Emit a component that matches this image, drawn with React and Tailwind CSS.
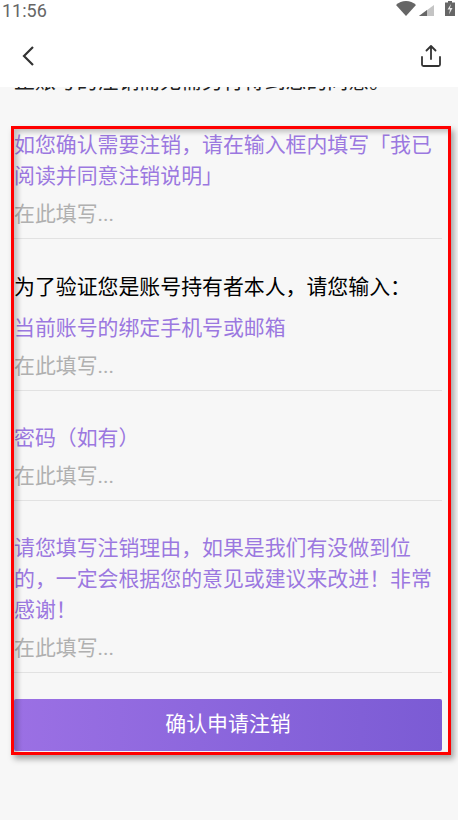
const FONT = "font-['Roboto','Noto_Sans_CJK_SC',sans-serif]";

function StatusIcons() {
  return (
    <div className="mt-[1px] flex items-end gap-[3px] self-start">
      <svg width="20" height="15" viewBox="0 0 20 15">
        <path d="M0 4C2.800 1.500 6.200 0 10 0s7.200 1.500 10 4L10 15z" fill="#666" />
      </svg>
      <svg width="15" height="11" viewBox="0 0 15 11">
        <path d="M15 0v11H0z" fill="#c4c4c4" />
        <path d="M8 5.100V11H0z" fill="#666" />
      </svg>
      <svg width="10" height="15" viewBox="0 0 10 15" className="ml-[8px]">
        <path d="M3 0h4v1.500h3V15H0V1.500h3z" fill="#666" />
        <path d="M6 3 2.500 8.500H5l-1 5 3.500-6.500H5z" fill="#e8e8e8" />
      </svg>
    </div>
  );
}

function Field({ label }) {
  return (
    <div className="border-b border-[#e2e2e2] pb-[8px]">
      <div className="text-[20.9px] leading-[31px] text-[#9b78e0]">{label}</div>
      <input
        placeholder="在此填写..."
        className="mt-[7px] block h-[31px] w-full bg-transparent text-[20.9px] leading-[31px] outline-none placeholder:text-[#b0b0b0]"
      />
    </div>
  );
}

export default function App() {
  return (
    <div className={`${FONT} flex h-[820px] w-[458px] flex-col overflow-hidden bg-[#f7f7f7]`}>
      <div className="bg-white">
        <div className="flex h-[20px] items-center justify-between pl-[2px] pr-[3px]">
          <span className="mt-[1px] text-[18px] leading-none text-[#666]">11:56</span>
          <StatusIcons />
        </div>
        <div className="flex h-[67px] items-center justify-between pl-[22px] pr-[17px] pt-[5px]">
          <svg width="12" height="20" viewBox="0 0 12 20" fill="none" stroke="#333" strokeWidth="2.200">
            <path d="M11 1 2 10l9 9" />
          </svg>
          <svg width="20" height="22" viewBox="0 0 20 22" fill="none" stroke="#333" strokeWidth="1.800" strokeLinecap="round" strokeLinejoin="round">
            <path d="M10 14V1.200M5.500 5.500 10 1l4.500 4.500" />
            <path d="M1 12v7.500A1.500 1.500 0 0 0 2.500 21h15a1.500 1.500 0 0 0 1.500-1.500V12" />
          </svg>
        </div>
      </div>

      <div className="flex h-[6px] items-end overflow-hidden pl-[14px]">
        <span className="-mb-[4px] shrink-0 text-[20.9px] leading-[31px] text-[#222]">止账号的注销而无需另行得到您的同意。</span>
      </div>

      <div className="relative ml-[11px] mt-[33px] w-[440px] border-[3px] border-[#ff0000] pb-[1px] pr-[6px] pt-[1px] shadow-[3px_4px_6px_rgba(0,0,0,0.35)] after:pointer-events-none after:absolute after:inset-0 after:shadow-[inset_4px_3px_5px_rgba(0,0,0,0.22)]">
        <Field label="如您确认需要注销，请在输入框内填写「我已阅读并同意注销说明」" />
        <div className="mt-[33px] mb-[10px] whitespace-nowrap text-[20.9px] leading-[31px] text-black">
          为了验证您是账号持有者本人，请您输入：
        </div>
        <Field label="当前账号的绑定手机号或邮箱" />
        <div className="mt-[32px]">
          <Field label="密码（如有）" />
        </div>
        <div className="mt-[32px]">
          <Field label="请您填写注销理由，如果是我们有没做到位的，一定会根据您的意见或建议来改进！非常感谢！" />
        </div>
        <button className="mt-[26px] block h-[52px] w-full rounded-[2px] bg-gradient-to-r from-[#9b70e4] to-[#7b5bd4] text-center text-[20.9px] text-white">
          确认申请注销
        </button>
      </div>
    </div>
  );
}
